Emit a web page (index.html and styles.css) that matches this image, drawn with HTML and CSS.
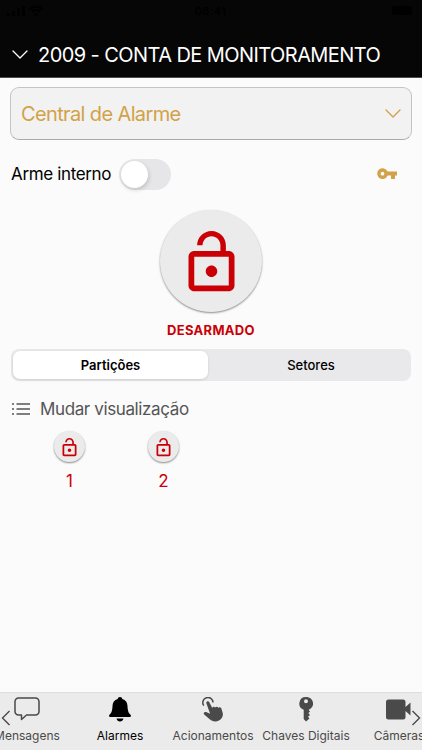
FILE: index.html
```html
<!DOCTYPE html>
<html lang="pt-BR">
<head>
<meta charset="utf-8">
<meta name="viewport" content="width=device-width, initial-scale=1">
<title>Alarmes</title>
<link rel="stylesheet" href="styles.css">
</head>
<body>
<svg width="0" height="0" class="defs">
  <symbol id="lock" viewBox="0 0 24 24"><path d="M12 17c1.1 0 2-.9 2-2s-.9-2-2-2-2 .9-2 2 .9 2 2 2zm6-9h-1V6c0-2.76-2.24-5-5-5S7 3.24 7 6h1.9c0-1.71 1.39-3.1 3.1-3.1 1.71 0 3.1 1.39 3.1 3.1v2H6c-1.1 0-2 .9-2 2v10c0 1.1.9 2 2 2h12c1.1 0 2-.9 2-2V10c0-1.1-.9-2-2-2zm0 12H6V10h12v10z"/></symbol>
</svg>
<div class="app">
  <header class="header">
    <div class="status">
      <svg class="signal" width="38" height="12" viewBox="0 0 38 12"><path d="M0 8h3v3H0zM5 6h3v5H5zM10 3h3v8h-3zM15 1h3v10h-3z"/><path d="M22 4.500q7-6 14 0M24.500 7q4.500-4 9 0" fill="none" stroke="#000" stroke-width="2"/><circle cx="29" cy="9.500" r="1.500"/></svg>
      <span>08:41</span>
      <svg class="battery" width="22" height="10" viewBox="0 0 22 10"><rect width="20" height="9" rx="2.500"/><path d="M21 3v3"/></svg>
    </div>
    <div class="account">
      <svg width="16" height="10" viewBox="0 0 16 10"><path d="M1 1l7 7 7-7"/></svg>
      <h1>2009 - CONTA DE MONITORAMENTO</h1>
    </div>
  </header>
  <main class="main">
    <div class="select">
      <span>Central de Alarme</span>
      <svg width="16" height="10" viewBox="0 0 16 10"><path d="M1 1l7 7 7-7"/></svg>
    </div>
    <div class="arm">
      <span>Arme interno</span>
      <span class="switch"></span>
      <svg class="key" width="20" height="12" viewBox="0 0 20 12"><path fill-rule="evenodd" d="M10.600 3.600A5.400 5.400 0 1 0 10.600 7.600H14V11h4V7.600h2v-4zM5.500 3.800a1.900 1.900 0 1 1 0 3.800 1.900 1.900 0 0 1 0-3.800z"/></svg>
    </div>
    <div class="state">
      <div class="disc large"><svg><use href="#lock"/></svg></div>
      <strong>DESARMADO</strong>
    </div>
    <div class="segments">
      <span class="segment active">Partições</span>
      <span class="segment">Setores</span>
    </div>
    <div class="view">
      <svg width="18" height="14" viewBox="0 0 18 14"><path d="M4.500 2H18M4.500 7H18M4.500 12H18M0 2h2M0 7h2M0 12h2"/></svg>
      <span>Mudar visualização</span>
    </div>
    <div class="partitions">
      <div class="partition"><div class="disc"><svg><use href="#lock"/></svg></div><span>1</span></div>
      <div class="partition"><div class="disc"><svg><use href="#lock"/></svg></div><span>2</span></div>
    </div>
  </main>
  <nav class="tabs">
    <div class="tab">
      <svg width="26" height="24" viewBox="0 0 26 24"><path d="M4.500 1h17a3.500 3.500 0 0 1 3.500 3.500v10a3.500 3.500 0 0 1-3.500 3.500H12.500L7.500 22.500V18h-3A3.500 3.500 0 0 1 1 14.500v-10A3.500 3.500 0 0 1 4.500 1z" fill="none" stroke="#4a4a4a" stroke-width="1.500" stroke-linejoin="round"/></svg>
      <span>Mensagens</span>
    </div>
    <div class="tab current">
      <svg width="22" height="25" viewBox="0 0 22 25"><path d="M11 0c-1.400 0-2.200.7-2.300 2C5.300 2.900 3.700 5.500 3.500 9c-.2 4.800-.9 6.800-3 8.700-.8.800-.5 2.300.8 2.300h19.400c1.300 0 1.600-1.500.8-2.300-2.100-1.900-2.800-3.900-3-8.700-.2-3.500-1.800-6.100-5.200-7C13.200.7 12.400 0 11 0zM7.500 21.500h7c-.5 2-1.700 3-3.500 3s-3-1-3.500-3z"/></svg>
      <span>Alarmes</span>
    </div>
    <div class="tab">
      <svg width="22" height="25" viewBox="0 0 22 25"><path d="M1.800 8.600A5.100 5.100 0 1 1 11 5.500" fill="none" stroke="#4a4a4a" stroke-width="1.500"/><path d="M4.300 6.100c-.5-1.500 2-2.800 2.900-1.200l3.100 6.200c.4-1.500 2.300-1.600 3-.5.7-1.200 2.400-1.200 3 .1.900-1 2.400-.6 3 .6l1.300 4.300c1 3.400-.7 6.500-3.700 8-3.300 1.600-6.800 1-9.500-1.500l-5.200-4.500c-1.300-1.300.2-3 1.900-2.500l4 1.600z"/></svg>
      <span>Acionamentos</span>
    </div>
    <div class="tab">
      <svg width="14" height="25" viewBox="0 0 14 25"><path fill-rule="evenodd" d="M7 0a6.600 6.600 0 0 0-2.300 12.800V22L7 24.500l3.500-3-1.500-1.700 2-1.800-1.700-2 1.700-1.300-1.300-1.900A6.600 6.600 0 0 0 7 0zm0 2.200a2 2 0 1 1 0 4 2 2 0 0 1 0-4z"/></svg>
      <span>Chaves Digitais</span>
    </div>
    <div class="tab">
      <svg width="26" height="22" viewBox="0 0 26 22"><path d="M2.500 1.500h14.500a2.500 2.500 0 0 1 2.500 2.500v5l5-4.500v13l-5-4.500v6a2.500 2.500 0 0 1-2.500 2.500H2.500A2.500 2.500 0 0 1 0 19V4a2.500 2.500 0 0 1 2.500-2.500z"/></svg>
      <span>Câmeras</span>
    </div>
    <svg class="arrow prev" width="10" height="16" viewBox="0 0 10 16"><path d="M8.500 1L1.500 8l7 7"/></svg>
    <svg class="arrow next" width="10" height="16" viewBox="0 0 10 16"><path d="M1.500 1l7 7-7 7"/></svg>
  </nav>
</div>
</body>
</html>
```
FILE: styles.css
```css
* { box-sizing: border-box; }
body { margin: 0; font-family: Inter, "Liberation Sans", sans-serif; background: #fbfbfb; color: #000; }
svg { display: block; flex: none; }
.defs { position: absolute; }
.app { width: 422px; height: 750px; display: flex; flex-direction: column; overflow: hidden; }
.header { height: 78px; background: #060606; border-bottom: 1px solid #4b4b4b; }
.status { height: 22px; padding: 0 8px 0 7px; display: grid; grid-template-columns: 1fr auto 1fr; align-items: center; font-size: 11px; font-weight: 600; letter-spacing: .5px; color: #000; }
.battery { justify-self: end; }
.account { height: 65px; padding-left: 12px; display: flex; align-items: center; gap: 10px; color: #fff; }
.account svg path { fill: none; stroke: #fff; stroke-width: 1.3; stroke-linecap: round; stroke-linejoin: round; }
h1 { margin: 0; font-size: 20px; line-height: 24px; font-weight: 400; letter-spacing: -0.57px; white-space: nowrap; }
.main { flex: 1; padding: 9px 10px 0; }
.select { height: 53px; padding: 0 10px; display: flex; align-items: center; justify-content: space-between; border: 1px solid #c4c4c4; border-bottom-color: #aaa; border-radius: 9px; background: #f2f2f2; color: #d1a247; font-size: 20px; letter-spacing: -0.63px; }
.select path { fill: none; stroke: #d1a247; stroke-width: 1.4; stroke-linecap: round; stroke-linejoin: round; }
.arm { height: 32px; margin-top: 18px; display: flex; align-items: center; font-size: 17px; letter-spacing: -0.35px; padding-left: 1px; }
.switch { width: 52px; height: 31px; margin-left: 8px; padding: 2px; border-radius: 16px; background: #e6e6e8; }
.switch::before { content: ""; display: block; width: 27px; height: 27px; border-radius: 50%; background: #fff; box-shadow: 1px 2px 4px rgba(0,0,0,.16); }
.key { margin-left: auto; margin-right: 15px; fill: #d1a247; }
.state { margin-top: 20px; display: flex; flex-direction: column; align-items: center; color: #cb0006; }
.disc { width: 31px; height: 31px; display: flex; align-items: center; justify-content: center; border-radius: 50%; background: #ebebeb; box-shadow: 0 1px 2px rgba(0,0,0,.45); }
.disc svg { width: 21px; height: 21px; margin-top: 1px; fill: #cb0006; }
.disc.large { width: 102px; height: 102px; }
.disc.large svg { width: 69px; height: 69px; margin-top: 2px; }
.state strong { margin-top: 10px; font-size: 13px; line-height: 16px; font-weight: 700; letter-spacing: .3px; }
.segments { margin: 11px 0 0 1px; width: 400px; height: 32px; padding: 2px; display: flex; border-radius: 8px; background: #e9e9eb; font-size: 13px; font-weight: 500; }
.segment { flex: 1; display: flex; align-items: center; justify-content: center; border-radius: 7px; }
.segment.active { flex: 0 0 195px; background: #fff; font-weight: 600; box-shadow: 0 1px 3px rgba(0,0,0,.12); }
.segment:last-child { padding-left: 5px; }
.view { height: 24px; margin: 16px 0 0 2px; display: flex; align-items: center; gap: 10px; color: #555; font-size: 17px; letter-spacing: -0.38px; }
.view path { stroke: #555; stroke-width: 1.3; }
.partitions { display: flex; padding-left: 12.5px; margin-top: 10px; }
.partition { width: 94px; display: flex; flex-direction: column; align-items: center; gap: 9px; color: #cb0006; font-size: 17px; line-height: 20px; }
.tabs { position: relative; height: 58px; border-top: 1px solid #dedede; background: #ebebeb; display: flex; margin-left: -20px; width: 466px; color: #4a4a4a; fill: #4a4a4a; }
.tab { flex: 0 0 93px; display: grid; grid-template-rows: 32px 21px; align-content: start; justify-items: center; align-items: center; font-size: 12px; white-space: nowrap; }
.tab span { padding-left: 1px; }
.current { color: #000; fill: #000; }
.arrow { position: absolute; top: 17px; fill: none; stroke: #4a4a4a; stroke-width: 1.4; }
.prev { left: 20.5px; }
.next { left: 431px; }
```
